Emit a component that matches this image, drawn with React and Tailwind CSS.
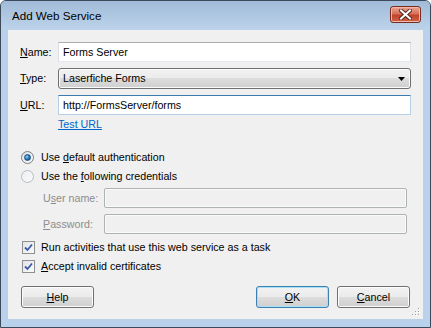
import React from "react";

const FONT = { fontFamily: '"Liberation Sans", Arial, sans-serif' };

function Key({ children }) {
  return <span className="underline underline-offset-[1px]">{children}</span>;
}

function TextBox({ value, focused }) {
  return (
    <div
      className={`flex h-[20px] flex-1 items-center border bg-white px-[4px] text-black ${
        focused
          ? "border-[#b5cfe7] border-t-[#3d7bad]"
          : "border-[#e2e8ee] border-t-[#abadb3] border-l-[#dbdfe6] border-r-[#dbdfe6]"
      }`}
    >
      {value}
    </div>
  );
}

function DisabledBox() {
  return <div className="mr-[4px] h-[20px] flex-1 rounded-[2px] border border-[#adb2b5] bg-[#f0f0f0] shadow-[inset_0_0_0_1px_#fafafa]" />;
}

function Radio({ checked }) {
  return (
    <div
      className={`flex h-[13px] w-[13px] items-center justify-center rounded-full border ${
        checked ? "border-[#7a7f87] bg-gradient-to-br from-[#e0e3e8] to-[#f8f8f8]" : "border-[#b8bcc2] bg-gradient-to-br from-[#ebedf0] to-[#fbfbfb]"
      }`}
    >
      {checked && (
        <div className="h-[7px] w-[7px] rounded-full border border-[#1a4f7e] bg-[radial-gradient(circle_at_35%_35%,#7ad3ff,#1b6cb5_60%,#0a3a6a)]" />
      )}
    </div>
  );
}

function Check() {
  return (
    <div className="flex h-[13px] w-[13px] items-center justify-center border border-[#8e8f8f] bg-gradient-to-br from-[#e1e4e8] to-[#fafafa]">
      <svg width="9" height="9" viewBox="0 0 9 9">
        <path d="M1 4.5 L3.5 7 L8 1.5" fill="none" stroke="#3a5aa8" strokeWidth="1.8" />
      </svg>
    </div>
  );
}

function Button({ children, isDefault }) {
  return (
    <div
      className={`flex h-[22px] w-[73px] items-center justify-center rounded-[3px] border text-black ${
        isDefault
          ? "border-[#3c7fb1] shadow-[inset_0_0_0_1px_#a6e0f8]"
          : "border-[#707070] shadow-[inset_0_0_0_1px_#fcfcfc]"
      } bg-[linear-gradient(#f2f2f2_0%,#ebebeb_50%,#dddddd_50%,#cfcfcf_100%)]`}
    >
      {children}
    </div>
  );
}

export default function App() {
  return (
    <div style={FONT} className="flex h-[328px] w-[431px] flex-col overflow-hidden rounded-t-[6px] border border-[#3b4a5a] bg-[#b9d1ea]">
      <div className="flex h-[29px] shrink-0 items-center justify-between bg-gradient-to-b from-[#a1bbd8] to-[#bcd3ea] pl-[11px] pr-[9px]">
        <span className="text-[11.6px] text-black">Add Web Service</span>
        <div className="mt-[-3px] flex h-[17px] w-[31px] items-center justify-center rounded-[3px] border border-[#7a2c20] bg-[linear-gradient(#e9a593_0%,#d6705a_45%,#c2432a_55%,#d0634a_100%)] shadow-[inset_0_0_0_1px_#efb8aa]">
          <svg width="13" height="11" viewBox="0 0 13 11">
            <path d="M2 1.5 L11 9.5 M11 1.5 L2 9.5" stroke="#5a2a22" strokeWidth="4" strokeLinecap="square" />
            <path d="M2 1.5 L11 9.5 M11 1.5 L2 9.5" stroke="#ffffff" strokeWidth="2" strokeLinecap="square" />
          </svg>
        </div>
      </div>

      <div className="relative mx-[7px] flex h-[289px] shrink-0 flex-col bg-[#f0f0f0] px-[12px] pt-[12px] text-[10.7px] text-black">
        <div className="flex h-[20px] items-center">
          <span className="w-[38px]"><Key>N</Key>ame:</span>
          <TextBox value="Forms Server" />
        </div>
        <div className="mt-[6px] flex h-[21px] items-center">
          <span className="w-[38px]"><Key>T</Key>ype:</span>
          <div className="flex h-[21px] flex-1 items-center justify-between rounded-[3px] border border-[#707070] bg-[linear-gradient(#f2f2f2_0%,#ebebeb_50%,#dddddd_50%,#cfcfcf_100%)] pl-[4px] pr-[5px] shadow-[inset_0_0_0_1px_#fafafa]">
            <span>Laserfiche Forms</span>
            <svg width="7" height="4" viewBox="0 0 7 4">
              <path d="M0 0 H7 L3.5 4 Z" fill="#000" />
            </svg>
          </div>
        </div>
        <div className="mt-[6px] flex h-[20px] items-center">
          <span className="w-[38px]"><Key>U</Key>RL:</span>
          <TextBox value="http://FormsServer/forms" focused />
        </div>
        <div className="ml-[38px] mt-[3px] h-[13px] leading-[13px] text-[#0066cc] underline">Test URL</div>

        <div className="ml-[1px] mt-[19px] flex h-[14px] items-center gap-[7px]">
          <Radio checked />
          <span>Use <Key>d</Key>efault authentication</span>
        </div>
        <div className="ml-[1px] mt-[5px] flex h-[14px] items-center gap-[7px]">
          <Radio />
          <span>Use the <Key>f</Key>ollowing credentials</span>
        </div>
        <div className="mt-[5px] flex h-[20px] items-center pl-[23px]">
          <span className="w-[61px] text-[#8d8d8d]">U<Key>s</Key>er name:</span>
          <DisabledBox />
        </div>
        <div className="mt-[6px] flex h-[20px] items-center pl-[23px]">
          <span className="w-[61px] text-[#8d8d8d]"><Key>P</Key>assword:</span>
          <DisabledBox />
        </div>

        <div className="ml-[2px] mt-[6px] flex h-[14px] items-center gap-[6px]">
          <Check />
          <span>Run activities that use this web service as a task</span>
        </div>
        <div className="ml-[2px] mt-[5px] flex h-[14px] items-center gap-[6px]">
          <Check />
          <span><Key>A</Key>ccept invalid certificates</span>
        </div>

        <div className="mt-[13px] flex items-center justify-between pl-[1px] pr-[1px]">
          <Button><span><Key>H</Key>elp</span></Button>
          <div className="flex gap-[8px]">
            <Button isDefault><span><Key>O</Key>K</span></Button>
            <Button><span><Key>C</Key>ancel</span></Button>
          </div>
        </div>

        <svg className="absolute bottom-[2px] right-[2px]" width="10" height="10" viewBox="0 0 10 10">
          {[[7, 1], [4, 4], [7, 4], [1, 7], [4, 7], [7, 7]].map(([x, y]) => (
            <g key={`${x}-${y}`}>
              <rect x={x + 1} y={y + 1} width="1" height="1" fill="#ffffff" />
              <rect x={x} y={y} width="1" height="1" fill="#a0a0a0" />
            </g>
          ))}
        </svg>
      </div>
      <div className="flex-1" />
    </div>
  );
}
